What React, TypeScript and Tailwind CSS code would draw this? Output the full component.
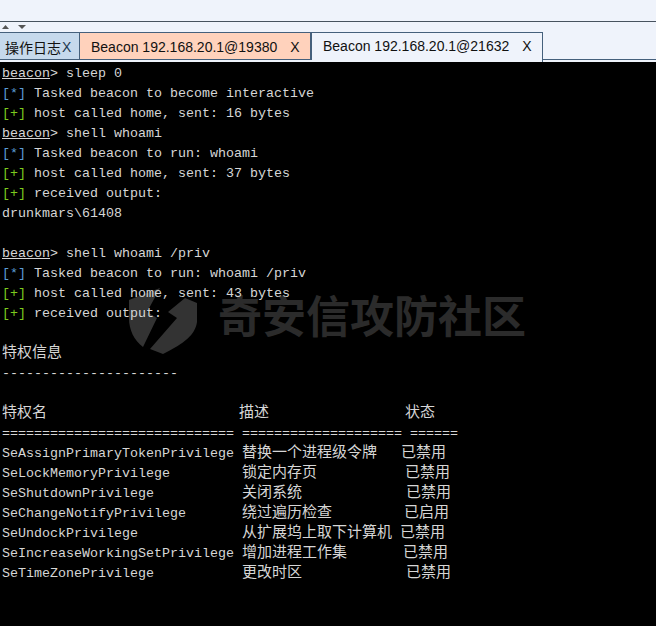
const rows: [string, string, string, string][] = [
  ['SeAssignPrimaryTokenPrivilege', '替换一个进程级令牌', '   ', '已禁用'],
  ['SeLockMemoryPrivilege        ', '锁定内存页', '           ', '已禁用'],
  ['SeShutdownPrivilege          ', '关闭系统', '             ', '已禁用'],
  ['SeChangeNotifyPrivilege      ', '绕过遍历检查', '         ', '已启用'],
  ['SeUndockPrivilege            ', '从扩展坞上取下计算机', ' ', '已禁用'],
  ['SeIncreaseWorkingSetPrivilege', '增加进程工作集', '       ', '已禁用'],
  ['SeTimeZonePrivilege          ', '更改时区', '             ', '已禁用'],
];

function Cjk({ children }: { children: string }) {
  return <span className="text-[15px] leading-[0] [font-family:'Noto_Sans_CJK_SC',sans-serif]">{children}</span>;
}

function Line({ children }: { children?: React.ReactNode }) {
  return <div className="h-5 leading-5 whitespace-pre">{children}</div>;
}

function Star({ text }: { text: string }) {
  return (
    <Line>
      <span className="text-[#5b9bd5]">[*]</span> {text}
    </Line>
  );
}

function Plus({ text }: { text: string }) {
  return (
    <Line>
      <span className="text-[#7ccb1e]">[+]</span> {text}
    </Line>
  );
}

function Prompt({ text }: { text: string }) {
  return (
    <Line>
      <span className="underline">beacon</span>&gt; {text}
    </Line>
  );
}

export default function App() {
  return (
    <div className="w-[656px] h-[626px] overflow-hidden flex flex-col bg-[#eff3fb] [font-family:'Liberation_Sans',Arial,sans-serif]">
      <div className="h-[21px] shrink-0" />
      <div className="h-[11px] shrink-0 border-t border-[#47525e] flex items-center gap-[5px] pl-[2px]">
        <svg width="7" height="4" viewBox="0 0 7 4" className="fill-[#555]">
          <path d="M3.5 0 7 4H0z" />
        </svg>
        <svg width="8" height="4" viewBox="0 0 8 4" className="ml-[4px] fill-[#555]">
          <path d="M0 0h8L4 4z" />
        </svg>
      </div>
      <div className="h-[30px] shrink-0 flex items-stretch text-[14px] text-[#111]">
        <div className="w-[80px] flex items-center pl-[5px] pt-[2px] mb-[2px] bg-[#c6d9ec] border-t border-r border-b border-[#45607c]">
          <span className="text-[14px] [font-family:'Noto_Sans_CJK_SC',sans-serif]">操作日志</span>
          <span className="ml-px text-[#22384f]">X</span>
        </div>
        <div className="w-[232px] flex items-center pl-[11px] pt-[2px] mb-[2px] bg-[#ffd2bc] border-t border-r-2 border-b border-[#45607c]">
          <span>Beacon 192.168.20.1@19380</span>
          <span className="ml-[13px]">X</span>
        </div>
        <div className="w-[231px] flex items-center pl-[11px] pb-[2px] bg-[#eff3fb] border-t border-r border-[#45607c]">
          <span>Beacon 192.168.20.1@21632</span>
          <span className="ml-[13px]">X</span>
        </div>
        <div className="flex-1 mb-[2px] border-b border-[#45607c]" />
      </div>
      <div className="relative flex-1 bg-black text-[#d6d6d6] pt-[2px] pl-[2px] text-[13.33px] [font-family:'Liberation_Mono','Courier_New',monospace]">
        <div className="absolute left-[120px] top-[213px]">
          <svg width="100" height="90" viewBox="0 0 100 90" className="fill-[#333333]">
            <path d="M9 25 40 13 27 37 37 43 23 72C14 65 9 55 9 43Z" />
            <path d="M65 23 77 28V47C75 60 65 68 43 79L30 74 57 43 48 37Z" />
          </svg>
        </div>
        <div className="absolute left-[218px] top-[224px] text-[44px] leading-[56px] font-bold text-[#2b2b2b] whitespace-nowrap [font-family:'Noto_Sans_CJK_SC',sans-serif]">
          奇安信攻防社区
        </div>
        <div className="relative">
          <Prompt text="sleep 0" />
          <Star text="Tasked beacon to become interactive" />
          <Plus text="host called home, sent: 16 bytes" />
          <Prompt text="shell whoami" />
          <Star text="Tasked beacon to run: whoami" />
          <Plus text="host called home, sent: 37 bytes" />
          <Plus text="received output:" />
          <Line>drunkmars\61408</Line>
          <Line />
          <Prompt text="shell whoami /priv" />
          <Star text="Tasked beacon to run: whoami /priv" />
          <Plus text="host called home, sent: 43 bytes" />
          <Plus text="received output:" />
          <Line />
          <Line><Cjk>特权信息</Cjk></Line>
          <Line>----------------------</Line>
          <Line />
          <Line>
            <Cjk>特权名</Cjk>
            {'                        '}
            <Cjk>描述</Cjk>
            {'                 '}
            <Cjk>状态</Cjk>
          </Line>
          <Line>============================= ==================== ======</Line>
          {rows.map((r) => (
            <Line key={r[0]}>
              {r[0]} <Cjk>{r[1]}</Cjk>
              {r[2]}
              <Cjk>{r[3]}</Cjk>
            </Line>
          ))}
        </div>
      </div>
    </div>
  );
}
